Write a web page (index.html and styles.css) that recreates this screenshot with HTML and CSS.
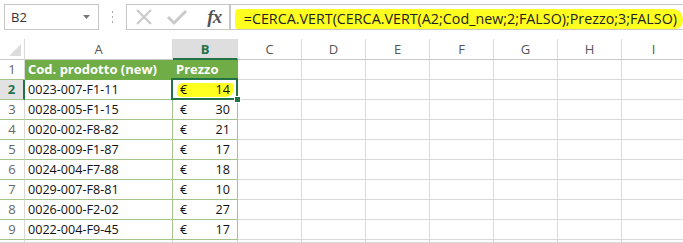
FILE: index.html
```html
<!DOCTYPE html>
<html>
<head>
  <meta charset="utf-8">
  <title>CERCA.VERT</title>
  <link rel="stylesheet" href="styles.css">
</head>
<body>
  <div class="bar">
    <div class="namebox">
      <span>B2</span>
      <svg class="drop" width="7" height="4" viewBox="0 0 7 4"><path d="M0 0h7L3.5 4z" fill="#777"/></svg>
    </div>
    <div class="grip"><i></i><i></i><i></i></div>
    <div class="btns">
      <svg width="22" height="20" viewBox="0 0 22 20"><path d="M4 3l14 14M18 3L4 17" stroke="#cacaca" stroke-width="2.2" fill="none"/></svg>
      <svg width="24" height="20" viewBox="0 0 24 20"><path d="M3 10l6 6L21 4" stroke="#cacaca" stroke-width="3" fill="none"/></svg>
      <span class="fx">fx</span>
    </div>
    <div class="formula"><span class="mark">=CERCA.VERT(CERCA.VERT(A2;Cod_new;2;FALSO);Prezzo;3;FALSO)</span></div>
  </div>

  <div class="sheet">
    <div class="ch corner"><span class="tri"></span></div>
    <div class="ch">A</div><div class="ch sel">B</div>
    <div class="ch">C</div><div class="ch">D</div><div class="ch">E</div><div class="ch">F</div><div class="ch">G</div><div class="ch">H</div><div class="ch">I</div>

    <div class="rh t">1</div>
    <div class="c t head">Cod. prodotto (new)</div><div class="c t head">Prezzo</div>
    <div class="c"></div><div class="c"></div><div class="c"></div><div class="c"></div><div class="c"></div><div class="c"></div><div class="c"></div>

    <div class="rh t sel">2</div>
    <div class="c t">0023-007-F1-11</div>
    <div class="c t money active"><span class="hl"></span><span>€</span><span>14</span></div>
    <div class="c"></div><div class="c"></div><div class="c"></div><div class="c"></div><div class="c"></div><div class="c"></div><div class="c"></div>

    <div class="rh t">3</div>
    <div class="c t">0028-005-F1-15</div><div class="c t money"><span>€</span><span>30</span></div>
    <div class="c"></div><div class="c"></div><div class="c"></div><div class="c"></div><div class="c"></div><div class="c"></div><div class="c"></div>

    <div class="rh t">4</div>
    <div class="c t">0020-002-F8-82</div><div class="c t money"><span>€</span><span>21</span></div>
    <div class="c"></div><div class="c"></div><div class="c"></div><div class="c"></div><div class="c"></div><div class="c"></div><div class="c"></div>

    <div class="rh t">5</div>
    <div class="c t">0028-009-F1-87</div><div class="c t money"><span>€</span><span>17</span></div>
    <div class="c"></div><div class="c"></div><div class="c"></div><div class="c"></div><div class="c"></div><div class="c"></div><div class="c"></div>

    <div class="rh t">6</div>
    <div class="c t">0024-004-F7-88</div><div class="c t money"><span>€</span><span>18</span></div>
    <div class="c"></div><div class="c"></div><div class="c"></div><div class="c"></div><div class="c"></div><div class="c"></div><div class="c"></div>

    <div class="rh t">7</div>
    <div class="c t">0029-007-F8-81</div><div class="c t money"><span>€</span><span>10</span></div>
    <div class="c"></div><div class="c"></div><div class="c"></div><div class="c"></div><div class="c"></div><div class="c"></div><div class="c"></div>

    <div class="rh t">8</div>
    <div class="c t">0026-000-F2-02</div><div class="c t money"><span>€</span><span>27</span></div>
    <div class="c"></div><div class="c"></div><div class="c"></div><div class="c"></div><div class="c"></div><div class="c"></div><div class="c"></div>

    <div class="rh t">9</div>
    <div class="c t">0022-004-F9-45</div><div class="c t money"><span>€</span><span>17</span></div>
    <div class="c"></div><div class="c"></div><div class="c"></div><div class="c"></div><div class="c"></div><div class="c"></div><div class="c"></div>

    <div class="rh"></div>
    <div class="c"></div><div class="c"></div>
    <div class="c"></div><div class="c"></div><div class="c"></div><div class="c"></div><div class="c"></div><div class="c"></div><div class="c"></div>
  </div>
</body>
</html>
```

FILE: styles.css
```css
html, body { margin:0; padding:0; background:#fff; }
body { width:683px; height:243px; overflow:hidden; font-family:"Open Sans", "Liberation Sans", sans-serif; }

/* formula bar */
.bar
{
  display:flex;
  align-items:flex-start;
  height:39px;
  padding:4px 0 0 4px;
  box-sizing:border-box;
}
.namebox
{
  width:102px;
  height:26px;
  box-sizing:border-box;
  border:1px solid #c6c6c6;
  display:flex;
  align-items:center;
  justify-content:space-between;
  padding:0 8px 0 6px;
  font-size:13px;
  color:#333;
}
.grip
{
  width:30px;
  height:26px;
  display:flex;
  flex-direction:column;
  align-items:center;
  justify-content:center;
  gap:3px;
}
.grip i { display:block; width:1px; height:2px; background:#aaa; }
.btns
{
  width:112px;
  height:26px;
  box-sizing:border-box;
  border:1px solid #c6c6c6;
  display:flex;
  align-items:center;
  padding:0 0 0 6px;
  gap:10px;
}
.fx
{
  font-family:"Liberation Serif", serif;
  font-style:italic;
  font-weight:bold;
  font-size:19px;
  color:#555;
  margin-left:8px;
  letter-spacing:-1px;
}
.formula
{
  flex:1;
  height:26px;
  box-sizing:border-box;
  border:1px solid #c6c6c6;
  border-right:none;
  padding:2px 0 0 4px;
}
.mark
{
  display:inline-block;
  background:#ffff20;
  border-radius:4px 10px 8px 3px;
  padding:0 6px 0 9px;
  height:20px;
  line-height:20px;
  font-size:14.3px;
  color:#222;
  white-space:nowrap;
}

/* grid */
.sheet
{
  display:grid;
  grid-template-columns:25px 148px 65px repeat(7, 64px);
  grid-template-rows:21px repeat(9, 20px) 3px;
  font-size:12.6px;
  color:#111;
}
.sheet > div
{
  box-sizing:border-box;
  border-right:1px solid #d9d9d9;
  border-bottom:1px solid #d9d9d9;
  white-space:nowrap;
  overflow:hidden;
}
.ch
{
  text-align:center;
  line-height:20px;
  font-size:13px;
  color:#555;
  border-bottom-color:#c8c8c8 !important;
}
.ch.sel
{
  background:#dedede;
  color:#217346;
  font-weight:bold;
  border-bottom:2px solid #217346 !important;
}
.corner { position:relative; }
.tri
{
  position:absolute;
  right:3px;
  bottom:3px;
  width:0;
  height:0;
  border-left:12px solid transparent;
  border-bottom:12px solid #dcdcdc;
}
.rh
{
  text-align:center;
  line-height:19px;
  font-size:13px;
  color:#666;
}
.rh.sel
{
  background:#e2e2e2;
  color:#217346;
  font-weight:bold;
  border-right:2px solid #217346 !important;
}
.c { padding:0 3px; line-height:19px; }
.sheet > .t { border-bottom-color:#a3c48a; }
.sheet > .c.t { border-right-color:#a3c48a; }
.head
{
  background:#70ad47;
  color:#fff;
  font-weight:bold;
  font-size:13px;
  border-bottom-color:#70ad47 !important;
  border-right-color:#70ad47 !important;
}
.money
{
  display:flex;
  justify-content:space-between;
  padding:0 7px 0 7px;
  position:relative;
}
.money span { position:relative; }
.sheet > .active { overflow:visible; z-index:3; }
.active::after
{
  content:"";
  position:absolute;
  left:-2px;
  top:-2px;
  right:-1px;
  bottom:-1px;
  border:2px solid #217346;
}
.active::before
{
  content:"";
  position:absolute;
  right:-4px;
  bottom:-4px;
  width:5px;
  height:5px;
  background:#217346;
  border:1px solid #fff;
  z-index:2;
}
.money .hl
{
  position:absolute;
  left:4px;
  right:3px;
  top:3px;
  bottom:2px;
  background:#ffff20;
  border-radius:6px 3px 8px 4px;
}
```
